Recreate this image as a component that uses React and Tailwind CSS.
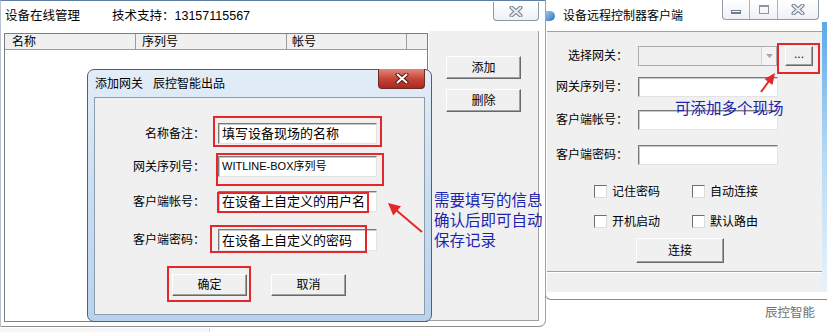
const FONT = "font-['Liberation_Sans','Noto_Sans_CJK_SC',sans-serif]";

const Btn = ({ children, className = "" }) => (
  <div
    className={`flex items-center justify-center bg-[#f0f0f0] border border-t-white border-l-white border-r-[#696969] border-b-[#696969] shadow-[inset_-1px_-1px_0_#a0a0a0] text-[12px] leading-none text-black ${className}`}
  >
    {children}
  </div>
);

const Sunken = ({ children, className = "" }) => (
  <div
    className={`flex items-center bg-white border border-t-[#7a7a7a] border-l-[#7a7a7a] border-r-[#e3e3e3] border-b-[#e3e3e3] shadow-[inset_1px_1px_0_#c8c8c8] pl-[3px] text-[13px] leading-none text-black whitespace-nowrap overflow-hidden ${className}`}
  >
    {children}
  </div>
);

const Check = ({ label }) => (
  <div className="flex items-center w-[98px]">
    <div className="w-[13px] h-[13px] bg-white border border-t-[#6e6e6e] border-l-[#6e6e6e] border-r-[#dcdcdc] border-b-[#dcdcdc]" />
    <span className="ml-[5px] text-[12px] leading-none">{label}</span>
  </div>
);

const CloseX = ({ stroke, fill, w = 14, h = 11 }) => (
  <svg width={w} height={h} viewBox="0 0 14 11">
    <path d="M2.5 1.5 L11.5 9.5 M11.5 1.5 L2.5 9.5" stroke={stroke} strokeWidth="4" strokeLinecap="round" />
    <path d="M2.5 1.5 L11.5 9.5 M11.5 1.5 L2.5 9.5" stroke={fill} strokeWidth="2" strokeLinecap="round" />
  </svg>
);

const DialogRow = ({ label, value, mt, h }) => (
  <div className={`flex items-center ${mt}`}>
    <div className="w-[110px] text-right text-[12px] leading-none">{label}</div>
    <Sunken className={`ml-[13px] w-[159px] ${h}`}>{value}</Sunken>
  </div>
);

const ClientRow = ({ label, mt, children }) => (
  <div className={`flex items-center ${mt}`}>
    <div className="w-[81px] text-right text-[12px] leading-none">{label}</div>
    {children}
  </div>
);

export default function App() {
  return (
    <div className={`relative w-[827px] h-[332px] overflow-hidden bg-white text-black ${FONT}`}>
      {/* left window: 设备在线管理 */}
      <div className="absolute left-0 top-0 w-[546px] h-[327px] bg-white border-t border-t-[#5d7fa6] border-l border-l-[#b8c2cc] border-r border-r-[#9aa4ae] border-b border-b-[#8d8d8d] rounded-br-[7px] flex flex-col">
        <div className="h-[30px] flex items-center pl-[4px] text-[12.5px] leading-none">
          <span>设备在线管理</span>
          <span className="ml-[32px]">技术支持：13157115567</span>
        </div>
        <div className="flex pl-[3px]">
          <div className="w-[424px] h-[289px] mt-[2px] border border-[#7f7f7f] bg-white">
            <div className="h-[16px] flex bg-[#f0f0f0] border-b border-[#9a9a9a] text-[12px] leading-none">
              <div className="w-[131px] pl-[7px] flex items-center border-r border-[#9a9a9a]">名称</div>
              <div className="w-[151px] pl-[6px] flex items-center border-r border-[#9a9a9a]">序列号</div>
              <div className="w-[120px] pl-[5px] flex items-center border-r border-[#9a9a9a]">帐号</div>
              <div className="flex-1" />
            </div>
          </div>
          <div className="w-[111px] h-[290px] bg-[#f0f0f0] border-l border-l-white border-r border-r-[#a0a0a0] border-b border-b-[#a0a0a0] flex flex-col pl-[17px] pt-[25px] gap-[10px]">
            <Btn className="w-[75px] h-[23px]">添加</Btn>
            <Btn className="w-[75px] h-[23px]">删除</Btn>
          </div>
        </div>
        <div className="absolute left-[492px] top-[1px] w-[46px] h-[19px] bg-gradient-to-b from-white to-[#eef1f5] border border-t-0 border-[#8c99a8] rounded-b-[4px] flex items-center justify-center">
          <CloseX stroke="#6f7d8d" fill="#e9edf2" />
        </div>
      </div>

      {/* faded strip under left window */}
      <div className="absolute left-0 top-[328px] w-[210px] h-[4px] border-r border-[#d8d8d8] bg-[#f7f7f7]" />

      {/* dialog: 添加网关 */}
      <div className="absolute left-[87px] top-[69px] w-[345px] h-[253px] rounded-[7px] border border-[#4d6074] bg-gradient-to-b from-[#e3edf8] via-[#c9ddf1] to-[#b9d3ee]">
        <div className="h-[27px] flex items-center pl-[7px] text-[12px] leading-none">
          <span>添加网关</span>
          <span className="ml-[10px]">辰控智能出品</span>
        </div>
        <div className="absolute left-[290px] top-[-1px] w-[47px] h-[20px] rounded-b-[4px] border border-t-0 border-[#6b2a22] bg-gradient-to-b from-[#e0877a] via-[#c7463a] to-[#a8281d] flex items-center justify-center">
          <CloseX stroke="#4a1a14" fill="#ffffff" />
        </div>
        <div className="mx-[6px] h-[218px] bg-[#f0f0f0] border border-[#8d9cab] flex flex-col">
          <DialogRow label="名称备注：" value="填写设备现场的名称" mt="mt-[25px]" h="h-[21px]" />
          <DialogRow label="网关序列号：" value={<span className="text-[11px]">WITLINE-BOX序列号</span>} mt="mt-[12px]" h="h-[21px]" />
          <DialogRow label="客户端帐号：" value="在设备上自定义的用户名" mt="mt-[14px]" h="h-[21px]" />
          <DialogRow label="客户端密码：" value="在设备上自定义的密码" mt="mt-[17px]" h="h-[22px]" />
          <div className="flex mt-[23px] pl-[77px] gap-[24px]">
            <Btn className="w-[75px] h-[22px] border-r-[#404040] border-b-[#404040]">确定</Btn>
            <Btn className="w-[75px] h-[22px]">取消</Btn>
          </div>
        </div>
      </div>

      {/* annotation text */}
      <div className="absolute left-[434px] top-[191px] text-[15.5px] leading-[20px] text-[#1d24b0]">
        <div>需要填写的信息</div>
        <div>确认后即可自动</div>
        <div>保存记录</div>
      </div>

      {/* right window: 设备远程控制器客户端 */}
      <div className="absolute left-[545px] top-0 w-[282px] h-[300px] bg-white border-l border-l-[#8ea6bf] border-b border-b-[#8a8a8a] rounded-bl-[6px]">
        <div className="h-[31px] flex items-center">
          <div className="w-[9px] h-[10px] rounded-r-full bg-gradient-to-br from-[#9cc8ee] to-[#2f6db3]" />
          <span className="ml-[8px] text-[12px] leading-none">设备远程控制器客户端</span>
        </div>
        <div className="absolute left-[176px] top-0 flex h-[20px] border border-t-0 border-[#8d9bab] rounded-b-[4px] bg-gradient-to-b from-white to-[#eef1f5]">
          <div className="w-[27px] flex items-center justify-center border-r border-[#a9b4c1]">
            <div className="w-[10px] h-[4px] mt-[4px] border border-[#6f7d8d] border-b-2" />
          </div>
          <div className="w-[28px] flex items-center justify-center border-r border-[#a9b4c1]">
            <div className="w-[10px] h-[9px] border border-[#8a96a4] border-t-2" />
          </div>
          <div className="w-[40px] flex items-center justify-center">
            <CloseX stroke="#6f7d8d" fill="#e9edf2" />
          </div>
        </div>
        <div className="ml-[1px] w-[276px] h-[261px] bg-[#f0f0f0] border-t border-t-[#a0a0a0] border-r border-r-[#c8c8c8] flex flex-col">
          <ClientRow label="选择网关：" mt="mt-[14px]">
            <div className="ml-[10px] w-[139px] h-[20px] bg-[#f0f0f0] border border-[#abadb3] flex justify-end">
              <div className="w-[15px] h-full flex items-center justify-center border-l border-[#d5d5d5] bg-[#f4f4f4]">
                <svg width="7" height="4" viewBox="0 0 7 4">
                  <path d="M0 0 L7 0 L3.5 4 Z" fill="#a8a8a8" />
                </svg>
              </div>
            </div>
            <Btn className="ml-[8px] w-[28px] h-[20px] pb-[4px]">...</Btn>
          </ClientRow>
          <ClientRow label="网关序列号：" mt="mt-[11px]">
            <Sunken className="ml-[10px] w-[140px] h-[20px]" />
          </ClientRow>
          <ClientRow label="客户端帐号：" mt="mt-[13px]">
            <Sunken className="ml-[10px] w-[140px] h-[20px]" />
          </ClientRow>
          <ClientRow label="客户端密码：" mt="mt-[15px]">
            <Sunken className="ml-[10px] w-[140px] h-[20px]" />
          </ClientRow>
          <div className="flex pl-[47px] mt-[20px]">
            <Check label="记住密码" />
            <Check label="自动连接" />
          </div>
          <div className="flex pl-[47px] mt-[17px]">
            <Check label="开机启动" />
            <Check label="默认路由" />
          </div>
          <div className="flex pl-[89px] mt-[10px]">
            <Btn className="w-[88px] h-[25px]">连接</Btn>
          </div>
          <div className="mt-[8px] border-t border-t-[#a0a0a0] border-b border-b-white" />
        </div>
        <div className="absolute right-0 top-[22px] w-[5px] h-[270px] bg-gradient-to-b from-[#5ba9e8] via-[#b8daf5] to-[#e8f3fb]" />
      </div>

      {/* watermark */}
      <div className="absolute left-[765px] top-[307px] text-[12.5px] leading-none text-[#707070] [text-shadow:0_0_1px_#ffffff]">
        辰控智能
      </div>

      {/* red annotation boxes */}
      <div className="absolute left-[213px] top-[116px] w-[169px] h-[31px] border-2 border-[#e5262b]" />
      <div className="absolute left-[216px] top-[153px] w-[168px] h-[33px] border-2 border-[#e5262b]" />
      <div className="absolute left-[217px] top-[192px] w-[152px] h-[21px] border-2 border-[#e5262b]" />
      <div className="absolute left-[210px] top-[225px] w-[157px] h-[28px] border-2 border-[#e5262b]" />
      <div className="absolute left-[167px] top-[266px] w-[84px] h-[36px] border-2 border-[#e5262b]" />
      <div className="absolute left-[777px] top-[43px] w-[43px] h-[31px] border-2 border-[#e5262b]" />

      {/* red arrows */}
      <svg className="absolute left-0 top-0 pointer-events-none" width="827" height="332">
        <line x1="422" y1="232" x2="396" y2="210" stroke="#e5262b" strokeWidth="2" />
        <polygon points="388,203 401,206.2 393.2,215.4" fill="#e5262b" />
        <line x1="761" y1="92" x2="769" y2="81" stroke="#e5262b" strokeWidth="2" />
        <polygon points="775,73 772.5,84.9 764.5,78.9" fill="#e5262b" />
      </svg>

      <div className="absolute left-[675px] top-[99px] text-[15.5px] leading-[20px] text-[#1d24b0]">
        可添加多个现场
      </div>
    </div>
  );
}
